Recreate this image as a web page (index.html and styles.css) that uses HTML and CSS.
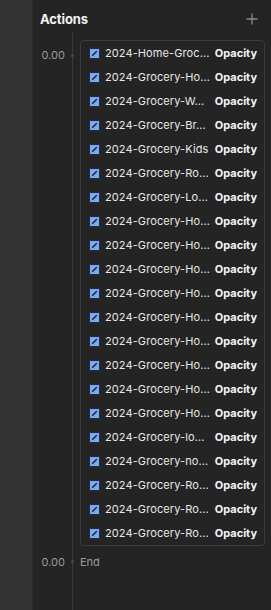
FILE: index.html
```html
<!DOCTYPE html>
<html>
<head>
<meta charset="utf-8">
<link rel="stylesheet" href="styles.css">
</head>
<body>
<div class="app">
  <div class="side"></div>
  <div class="panel">
    <div class="header">
      <span class="title">Actions</span>
      <svg class="plus" width="12" height="12" viewBox="0 0 12 12"><path d="M6 0.5V11.5M0.5 6H11.5" stroke="#8a8a8a" stroke-width="1.3"/></svg>
    </div>
    <div class="timeline">
      <div class="track">
        <div class="time start">0.00</div>
        <div class="box" id="box"></div>
      </div>
      <div class="track end">
        <div class="time">0.00</div>
        <div class="endlabel">End</div>
      </div>
    </div>
  </div>
</div>
<script src="app.js"></script>
</body>
</html>
```
FILE: app.js
```js
const names = [
  "2024-Home-Groc…","2024-Grocery-Ho…","2024-Grocery-W…","2024-Grocery-Br…","2024-Grocery-Kids",
  "2024-Grocery-Ro…","2024-Grocery-Lo…","2024-Grocery-Ho…","2024-Grocery-Ho…","2024-Grocery-Ho…",
  "2024-Grocery-Ho…","2024-Grocery-Ho…","2024-Grocery-Ho…","2024-Grocery-Ho…","2024-Grocery-Ho…",
  "2024-Grocery-Ho…","2024-Grocery-lo…","2024-Grocery-no…","2024-Grocery-Ro…","2024-Grocery-Ro…",
  "2024-Grocery-Ro…"
];
const box = document.getElementById('box');
names.forEach(n => {
  const r = document.createElement('div');
  r.className = 'row';
  r.innerHTML = '<span class="chk"><svg width="11" height="11" viewBox="0 0 11 11"><rect x="0.5" y="0.5" width="10" height="10" rx="1" fill="#79a8f2" stroke="#1c2a40"/><path d="M3.2 7.8L7.8 3.2" stroke="#1a1a1a" stroke-width="1.3"/></svg></span><span class="name">' + n.replace('…','...') + '</span><span class="prop">Opacity</span>';
  box.appendChild(r);
});
```
FILE: styles.css
```css
html, body { margin: 0; padding: 0; background: #242424; }
body { font-family: Inter, "Noto Sans", sans-serif; }
.app { display: flex; width: 271px; height: 610px; overflow: hidden; }
.side { width: 32px; background: #333333; border-right: 1px solid #2b2b2b; flex: none; }
.panel { flex: 1; background: #242424; position: relative; }
.header { display: flex; align-items: center; justify-content: space-between; padding: 0 13px 0 7px; height: 38px; }
.title { color: #f2f2f2; font-weight: 700; font-size: 13px; letter-spacing: -0.1px; }
.timeline { position: relative; padding-top: 2px; }
.timeline::before { content: ""; position: absolute; left: 39px; top: -6px; bottom: -100px; width: 1px; background: #3a3a3a; }
.track { display: flex; align-items: flex-start; position: relative; }
.time { width: 32px; color: #9a9a9a; font-size: 11px; text-align: right; height: 24px; line-height: 24px; flex: none; }
.start { margin-top: 3px; }
.track::after { content: ""; position: absolute; left: 38px; width: 3px; height: 3px; border-radius: 50%; background: #4a4a4a; }
.track:first-child::after { top: 14px; }
.track.end::after { top: 10px; }
.box { margin-left: 15px; width: 183px; border: 1px solid #3c3c3c; border-radius: 4px; }
.row { display: flex; align-items: center; height: 24px; padding-left: 8px; font-size: 11px; color: #e8e8e8; }
.chk { display: flex; width: 11px; height: 11px; margin-right: 5px; }
.name { flex: 1; white-space: nowrap; overflow: hidden; letter-spacing: 0.1px; }
.prop { font-weight: 700; color: #f4f4f4; margin-right: 7px; }
.end { margin-top: 4px; }
.endlabel { margin-left: 15px; color: #9a9a9a; font-size: 11px; line-height: 24px; height: 24px; }
```
